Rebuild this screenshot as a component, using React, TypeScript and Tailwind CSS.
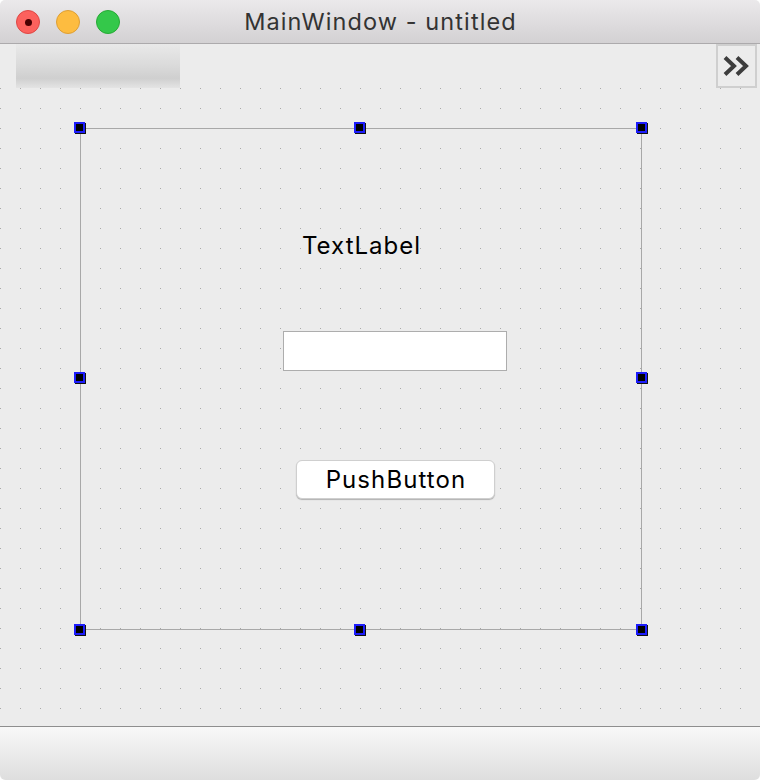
import React from "react";

const font = { fontFamily: '"Inter", "Noto Sans", sans-serif' };

function Handle({ cls }: { cls: string }) {
  return (
    <div
      className={`absolute w-[11px] h-[11px] border-2 border-[#1d1dfb] bg-black shadow-[1px_1px_0_#111] ${cls}`}
    />
  );
}

export default function App() {
  return (
    <div className="w-[760px] h-[780px] bg-[#ececec] flex flex-col overflow-hidden rounded-[5px]" style={font}>
      {/* Title bar */}
      <div className="h-[44px] shrink-0 relative flex items-center justify-center bg-gradient-to-b from-[#ebe9eb] to-[#d3d1d3] border-b border-[#acaaac] rounded-t-[6px]">
        <div className="absolute left-[16px] top-[10px] flex gap-[16px]">
          <div className="w-[24px] h-[24px] rounded-full bg-[#fc615d] border border-[#df4744] flex items-center justify-center">
            <div className="w-[7px] h-[7px] rounded-full bg-[#4a0002]" />
          </div>
          <div className="w-[24px] h-[24px] rounded-full bg-[#fdbc40] border border-[#de9f34]" />
          <div className="w-[24px] h-[24px] rounded-full bg-[#34c84a] border border-[#27aa35]" />
        </div>
        <span className="text-[23.5px] text-[#333333] leading-none tracking-[1.1px] pl-[1px]">MainWindow - untitled</span>
      </div>

      {/* Toolbar */}
      <div className="h-[44px] shrink-0 flex items-stretch justify-between">
        <div className="ml-[16px] w-[164px] bg-[linear-gradient(to_bottom,#e9e9e9_0%,#dadada_50%,#cfcfcf_78%,#e4e4e4_100%)]" />
        <div className="mr-[3px] w-[41px] border-2 border-[#cfcfcf] flex items-center justify-center">
          <svg width="30" height="22" viewBox="0 0 30 22">
            <path d="M3 2.5 L12 11 L3 19.5" fill="none" stroke="#3d3d3d" strokeWidth="4" />
            <path d="M15 2.5 L24 11 L15 19.5" fill="none" stroke="#3d3d3d" strokeWidth="4" />
          </svg>
        </div>
      </div>

      {/* Central widget with dot grid */}
      <div className="h-[638px] shrink-0 relative">
        <svg className="absolute inset-0" width="760" height="638">
          <defs>
            <pattern id="dots" x="0" y="0" width="20" height="20" patternUnits="userSpaceOnUse">
              <rect x="0" y="0" width="1" height="1" fill="#aaaaaa" />
            </pattern>
          </defs>
          <rect width="760" height="638" fill="url(#dots)" />
        </svg>

        <div className="relative ml-[80px] mt-[40px] w-[562px] h-[502px] border border-[#a8a8a8]">
          {/* Handles */}
          <Handle cls="left-[-7px] top-[-7px]" />
          <Handle cls="left-[273px] top-[-7px]" />
          <Handle cls="right-[-6px] top-[-7px]" />
          <Handle cls="left-[-7px] top-[243px]" />
          <Handle cls="right-[-6px] top-[243px]" />
          <Handle cls="left-[-7px] bottom-[-6px]" />
          <Handle cls="left-[273px] bottom-[-6px]" />
          <Handle cls="right-[-6px] bottom-[-6px]" />

          {/* Form widgets on the designer canvas */}
          <div className="absolute left-[221px] top-[105px] text-[24px] leading-none tracking-[1px] text-black">TextLabel</div>
          <div className="absolute left-[202px] top-[202px] w-[224px] h-[40px] bg-white border border-[#adadad]" />
          <div className="absolute left-[215px] top-[331px] w-[199px] h-[39px] bg-white rounded-[6px] border border-[#cfcfcf] shadow-[0_1px_1px_rgba(0,0,0,0.25)] flex items-center justify-center">
            <span className="text-[24px] leading-none tracking-[1.1px] pl-[1px] text-black">PushButton</span>
          </div>
        </div>
      </div>

      {/* Status bar */}
      <div className="flex-1 border-t border-[#8e8e8e] bg-gradient-to-b from-[#f8f8f8] to-[#dedede] rounded-b-[6px]" />
    </div>
  );
}
